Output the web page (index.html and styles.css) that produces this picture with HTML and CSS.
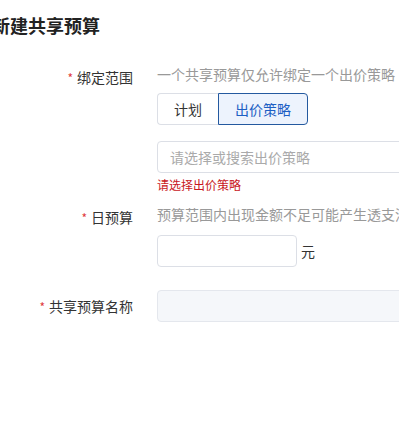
FILE: index.html
```html
<!DOCTYPE html>
<html lang="zh-CN">
<head>
  <meta charset="UTF-8">
  <meta name="viewport" content="width=device-width, initial-scale=1.0">
  <title>新建共享预算</title>
  <link rel="stylesheet" href="styles.css">
</head>
<body>
  <h2 class="title">新建共享预算</h2>

  <div class="form">
    <!-- 绑定范围 -->
    <div class="row has-error">
      <label class="label"><span class="req">*</span>绑定范围</label>
      <div class="field">
        <p class="hint">一个共享预算仅允许绑定一个出价策略</p>
        <div class="seg">
          <button class="seg-btn">计划</button>
          <button class="seg-btn active">出价策略</button>
        </div>
        <div class="select">请选择或搜索出价策略</div>
        <p class="error">请选择出价策略</p>
      </div>
    </div>

    <!-- 日预算 -->
    <div class="row">
      <label class="label"><span class="req">*</span>日预算</label>
      <div class="field">
        <p class="hint">预算范围内出现金额不足可能产生透支消耗，请合理设置预算金额</p>
        <div class="money">
          <input type="text" class="input short">
          <span class="unit">元</span>
        </div>
      </div>
    </div>

    <!-- 共享预算名称 -->
    <div class="row">
      <label class="label"><span class="req">*</span>共享预算名称</label>
      <div class="field">
        <input type="text" class="input disabled" disabled>
      </div>
    </div>
  </div>
</body>
</html>
```

FILE: styles.css
```css
body {
  margin: 0;
  background: #fff;
  font-family: "Noto Sans CJK SC", "Noto Sans", sans-serif;
  font-size: 14px;
  color: #333;
  overflow: hidden;
}

.title {
  margin: 12px 0 23px -8px;
  font-size: 18px;
  line-height: 26px;
  font-weight: bold;
  color: #222;
}

.form {
  width: 560px;
}

.row {
  display: flex;
  gap: 24px;
  margin-bottom: 23px;
}
.row.has-error {
  margin-bottom: 6px;
}

.label {
  width: 133px;
  flex: none;
  text-align: right;
  line-height: 32px;
  color: #333;
}
.req {
  color: #e0393e;
  font-size: 12px;
  margin-right: 4px;
}

.field {
  flex: 1;
}

.hint {
  margin: 0;
  line-height: 26px;
  color: #999;
  white-space: nowrap;
}

.seg {
  display: flex;
  margin-top: 6px;
}
.seg-btn {
  height: 32px;
  padding: 0 16px;
  font: inherit;
  color: #333;
  background: #fff;
  border: 1px solid #dcdfe6;
  cursor: pointer;
}
.seg-btn:first-child {
  border-radius: 4px 0 0 4px;
  border-right: none;
}
.seg-btn.active {
  color: #1d5fc4;
  background: #edf3fd;
  border-color: #24599f;
  border-radius: 0 4px 4px 0;
}

.select {
  box-sizing: border-box;
  height: 32px;
  margin-top: 16px;
  padding: 0 12px;
  line-height: 30px;
  color: #aaa;
  border: 1px solid #dcdfe6;
  border-radius: 4px;
}

.error {
  margin: 2px 0 0;
  font-size: 12px;
  line-height: 20px;
  color: #c8161d;
}

.money {
  display: flex;
  align-items: center;
  gap: 4px;
  margin-top: 8px;
}

.input {
  box-sizing: border-box;
  display: block;
  width: 100%;
  height: 32px;
  padding: 0 12px;
  font: inherit;
  border: 1px solid #dcdfe6;
  border-radius: 4px;
  outline: none;
}
.input.short {
  width: 140px;
}
.input.disabled {
  background: #f5f7fa;
  border-color: #e4e7ed;
}

.unit {
  color: #333;
}
```
